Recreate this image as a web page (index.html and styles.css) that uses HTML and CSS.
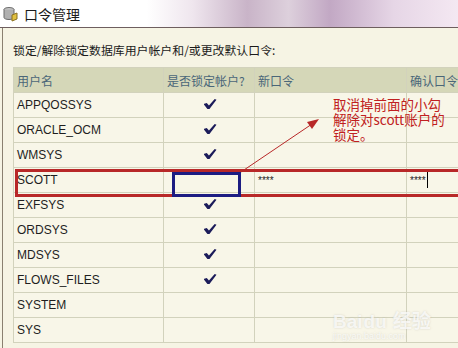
FILE: index.html
```html
<!DOCTYPE html>
<html lang="zh-CN">
<head>
    <meta charset="UTF-8">
    <title>口令管理</title>
    <link rel="stylesheet" href="styles.css">
</head>
<body>
    <div class="window">
        <div class="titlebar">
            <svg class="app-icon" width="16" height="16" viewBox="0 0 16 16">
                <ellipse cx="6" cy="3.5" rx="5" ry="2" fill="#c8c8c8" stroke="#6a6a6a"/>
                <path d="M1 3.5v8c0 1.1 2.2 2 5 2s5-.9 5-2v-8" fill="#b0b0b0" stroke="#6a6a6a"/>
                <path d="M9 9l5-2v6l-5 2z" fill="#e0c040" stroke="#8a7020"/>
            </svg>
            <span class="title">口令管理</span>
        </div>

        <div class="panel">
            <div class="label">锁定/解除锁定数据库用户帐户和/或更改默认口令:</div>

            <table class="users">
                <colgroup>
                    <col class="c-name">
                    <col class="c-lock">
                    <col class="c-pass">
                    <col class="c-conf">
                </colgroup>
                <tr>
                    <th>用户名</th>
                    <th>是否锁定帐户?</th>
                    <th>新口令</th>
                    <th>确认口令</th>
                </tr>
                <tr><td>APPQOSSYS</td><td class="chk"><span class="tick"></span></td><td></td><td></td></tr>
                <tr><td>ORACLE_OCM</td><td class="chk"><span class="tick"></span></td><td></td><td></td></tr>
                <tr><td>WMSYS</td><td class="chk"><span class="tick"></span></td><td></td><td></td></tr>
                <tr><td>SCOTT</td><td class="chk"></td><td class="stars">****</td><td class="stars">****<span class="caret"></span></td></tr>
                <tr><td>EXFSYS</td><td class="chk"><span class="tick"></span></td><td></td><td></td></tr>
                <tr><td>ORDSYS</td><td class="chk"><span class="tick"></span></td><td></td><td></td></tr>
                <tr><td>MDSYS</td><td class="chk"><span class="tick"></span></td><td></td><td></td></tr>
                <tr><td>FLOWS_FILES</td><td class="chk"><span class="tick"></span></td><td></td><td></td></tr>
                <tr><td>SYSTEM</td><td class="chk"></td><td></td><td></td></tr>
                <tr><td>SYS</td><td class="chk"></td><td></td><td></td></tr>
            </table>
        </div>

        <!-- annotation drawn over the dialog -->
        <div class="mark-row"></div>
        <div class="mark-cell"></div>
        <svg class="arrow" width="458" height="348" viewBox="0 0 458 348">
            <line x1="241" y1="172" x2="312" y2="124" stroke="#b82828" stroke-width="1"/>
            <path d="M319 119l-12 3 5 7z" fill="#b82828"/>
        </svg>
        <div class="note">
            <div>取消掉前面的小勾</div>
            <div>解除对scott账户的</div>
            <div>锁定。</div>
        </div>
        <div class="watermark">Bai<span>du</span> 经验<small>jingyan.baidu.com</small></div>
    </div>
</body>
</html>
```

FILE: styles.css
```css
body {
    margin: 0;
    background-color: #ffffff;
    font-family: "Liberation Sans", "Noto Sans CJK SC", sans-serif;
}

.window {
    position: relative;
    width: 458px;
    height: 348px;
    overflow: hidden;
    background-color: #f6f4e4;
}

.titlebar {
    display: flex;
    align-items: center;
    gap: 5px;
    height: 28px;
    padding-left: 3px;
    box-sizing: border-box;
    border-bottom: 1px solid #6e5e5e;
    background: linear-gradient(to right, #ffffff 0%, #ffffff 32%, #efe6ee 42%, #c9b4c8 54%, #ddd0dc 63%, #c2a8c4 72%, #e6d6e6 86%, #f4e8f2 100%);
}

.title {
    font-family: "Noto Sans CJK SC", sans-serif;
    font-size: 14px;
    color: #1a1a1a;
}

.panel {
    margin-left: 2px;
    border-left: 1px solid #8a8070;
    height: 320px;
    padding: 10px 0 0 10px;
    box-sizing: border-box;
    overflow: hidden;
}

.label {
    font-family: "Noto Sans CJK SC", sans-serif;
    font-size: 11.9px;
    color: #1a1a1a;
    height: 29px;
    line-height: 24px;
}

.users {
    border-collapse: collapse;
    table-layout: fixed;
    width: 543px;
    font-size: 12px;
    color: #1e1e1e;
}

.c-name { width: 150px; }
.c-lock { width: 91px; }
.c-pass { width: 152px; }
.c-conf { width: 150px; }

.users th,
.users td {
    height: 24px;
    padding: 0 0 0 3px;
    border: 1px solid #d2d2bc;
    text-align: left;
    white-space: nowrap;
    overflow: hidden;
}

.users th {
    background-color: #d5d7b8;
    font-family: "Noto Sans CJK SC", sans-serif;
    font-weight: normal;
    font-size: 12px;
    color: #4a6678;
}

.users td {
    background-color: #f8f6e8;
}

.users td.chk {
    text-align: center;
    padding: 0;
}

.tick {
    display: inline-block;
    width: 13px;
    height: 10px;
    margin-left: 2px;
    background: #1c1c5a;
    clip-path: polygon(0 50%, 25% 40%, 42% 66%, 86% 0, 100% 8%, 46% 100%, 30% 100%);
}

.users td.stars {
    font-size: 10px;
    vertical-align: middle;
}

.caret {
    display: inline-block;
    width: 1px;
    height: 16px;
    margin-left: 1px;
    vertical-align: -4px;
    background-color: #000000;
}

.mark-row {
    position: absolute;
    left: 15px;
    top: 169px;
    width: 460px;
    height: 22px;
    border: 3px solid #b82828;
    border-right: none;
}

.mark-cell {
    position: absolute;
    left: 172px;
    top: 172px;
    width: 63px;
    height: 19px;
    border: 3px solid #1c1c82;
}

.arrow {
    position: absolute;
    left: 0;
    top: 0;
}

.note {
    position: absolute;
    left: 333px;
    top: 97px;
    font-family: "Noto Sans CJK SC", sans-serif;
    font-size: 13.5px;
    color: #c02020;
    white-space: nowrap;
}

.note div {
    height: 15px;
    line-height: 15px;
}

.watermark {
    position: absolute;
    left: 333px;
    top: 306px;
    font-family: "Liberation Sans", "Noto Sans CJK SC", sans-serif;
    font-size: 19px;
    font-weight: bold;
    color: rgba(255, 255, 255, 0.75);
    text-shadow: 0 0 2px rgba(150, 150, 140, 0.35);
}

.watermark span {
    padding: 0 1px;
}

.watermark small {
    display: block;
    font-size: 9px;
    font-weight: normal;
    margin-top: -2px;
}
```
